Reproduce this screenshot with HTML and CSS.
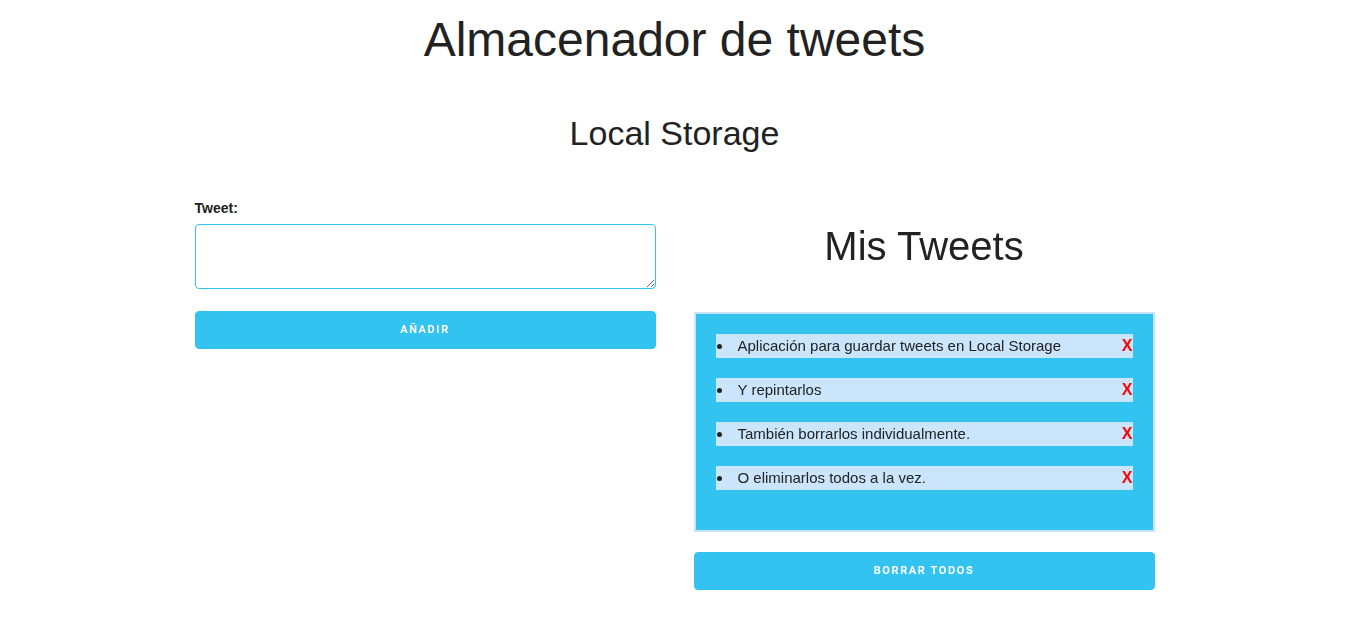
FILE: index.html
```html
<!DOCTYPE html>
<html lang="es">
<head>
<meta charset="utf-8">
<title>Almacenador de tweets</title>
<link rel="stylesheet" href="styles.css">
</head>
<body>
<div class="container">
  <h1 class="title">Almacenador de tweets</h1>
  <h2 class="subtitle">Local Storage</h2>
  <div class="row">
    <div class="col">
      <form class="form">
        <label class="label" for="tweet">Tweet:</label>
        <textarea id="tweet" class="textarea" autofocus></textarea>
        <button type="button" class="button">Añadir</button>
      </form>
    </div>
    <div class="col">
      <h2 class="mis">Mis Tweets</h2>
      <div class="panel">
        <ul class="list">
          <li class="item"><span class="text">Aplicación para guardar tweets en Local Storage</span><a class="del">X</a></li>
          <li class="item"><span class="text">Y repintarlos</span><a class="del">X</a></li>
          <li class="item"><span class="text">También borrarlos individualmente.</span><a class="del">X</a></li>
          <li class="item"><span class="text">O eliminarlos todos a la vez.</span><a class="del">X</a></li>
        </ul>
      </div>
      <button type="button" class="button">Borrar todos</button>
    </div>
  </div>
</div>
</body>
</html>
```
FILE: styles.css
```css
html, body {
  margin: 0;
  padding: 0;
  background: #fff;
}
body {
  font-family: "Liberation Sans", Arial, sans-serif;
  color: #222;
}
.container {
  width: 960px;
  margin: 0 auto;
}
.title {
  margin: 0;
  padding-top: 9px;
  font-size: 48px;
  font-weight: 400;
  line-height: 62px;
  text-align: center;
}
.subtitle {
  margin: 40px 0 0;
  font-size: 34px;
  font-weight: 400;
  line-height: 44px;
  text-align: center;
}
.row {
  display: flex;
  gap: 38px;
  margin-top: 42px;
}
.col {
  flex: 1 1 0;
  min-width: 0;
}
.form {
  display: flex;
  flex-direction: column;
}
.label {
  font-family: "Liberation Sans", Arial, sans-serif;
  font-weight: 700;
  font-size: 14px;
  line-height: 20px;
  color: #222;
  margin-top: 1px;
  margin-bottom: 6px;
}
.textarea {
  box-sizing: border-box;
  height: 65px;
  border: 1px solid #33C3F0;
  border-radius: 4px;
  padding: 6px 10px;
  font: 15px "Liberation Sans", sans-serif;
  color: #222;
  caret-color: #222;
  outline: none;
  margin: 0 0 22px;
  width: 100%;
}
.button {
  display: block;
  box-sizing: border-box;
  width: 100%;
  height: 38px;
  border: 1px solid #33C3F0;
  border-radius: 4px;
  background: #33C3F0;
  color: #fff;
  font-family: Roboto, "Liberation Sans", sans-serif;
  font-size: 11px;
  font-weight: 700;
  letter-spacing: 1.6px;
  text-transform: uppercase;
  line-height: 36px;
  padding: 0 30px;
  cursor: pointer;
}
.mis {
  margin: 25px 0 0;
  font-size: 40px;
  font-weight: 400;
  line-height: 48px;
  text-align: center;
}
.panel {
  margin-top: 42px;
  background: #33C3F0;
  border: 2px solid #c7e4fb;
  padding: 20px 20px 20px;
  margin-bottom: 20px;
}
.list {
  list-style: none;
  margin: 0;
  padding: 0;
}
.item {
  display: flex;
  align-items: center;
  justify-content: space-between;
  background: #cae5fc;
  height: 24px;
  line-height: 24px;
  font-size: 15px;
  margin-bottom: 20px;
}
.text::before {
  content: "";
  display: inline-block;
  width: 5px;
  height: 5px;
  border-radius: 50%;
  background: #222;
  margin: 0 16px 2px 1px;
  vertical-align: middle;
}
.del {
  color: #ff0000;
  font-weight: 700;
  font-size: 16px;
  cursor: pointer;
}
```
